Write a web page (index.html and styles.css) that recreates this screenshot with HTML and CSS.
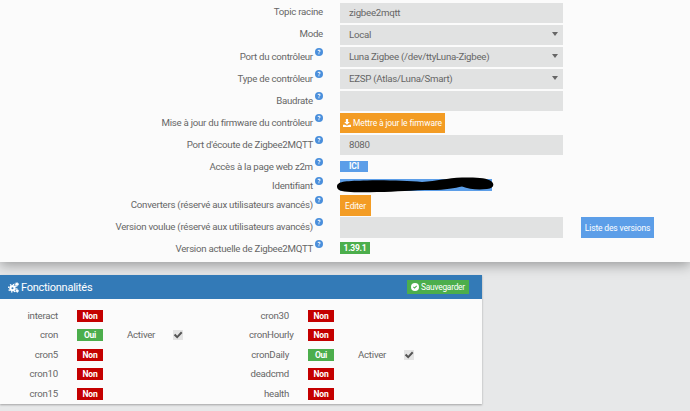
FILE: index.html
```html
<!DOCTYPE html>
<html lang="fr">
<head>
<meta charset="utf-8">
<title>Zigbee2MQTT</title>
<link rel="stylesheet" href="styles.css">
</head>
<body>
<svg class="sprites" width="0" height="0" aria-hidden="true">
  <symbol id="help" viewBox="0 0 16 16"><circle cx="8" cy="8" r="8" fill="#4a8fdc"/><path d="M5.200 6.200C5.300 4.500 6.500 3.600 8.100 3.600c1.700 0 2.900 1 2.900 2.400 0 1.100-.6 1.700-1.400 2.200-.7.500-.9.700-.9 1.500H7c0-1.300.4-1.900 1.200-2.400.7-.5 1-.8 1-1.300 0-.6-.5-1-1.100-1-.7 0-1.100.4-1.200 1.200zM6.900 10.600h1.900v1.900H6.900z" fill="#fff"/></symbol>
  <symbol id="ok" viewBox="0 0 16 16"><circle cx="8" cy="8" r="8" fill="#fff"/><path d="M4 8.300l1.500-1.500 1.700 1.700 3.400-3.500 1.500 1.500-4.900 5z" fill="#4cae4c"/></symbol>
</svg>

<section class="config">
  <div class="row"><span class="label">Topic racine</span><div class="field">zigbee2mqtt</div></div>
  <div class="row"><span class="label">Mode</span><div class="field select">Local</div></div>
  <div class="row"><span class="label">Port du contrôleur <svg class="help"><use href="#help"/></svg></span><div class="field select">Luna Zigbee (/dev/ttyLuna-Zigbee)</div></div>
  <div class="row"><span class="label">Type de contrôleur <svg class="help"><use href="#help"/></svg></span><div class="field select">EZSP (Atlas/Luna/Smart)</div></div>
  <div class="row"><span class="label">Baudrate <svg class="help"><use href="#help"/></svg></span><div class="field"></div></div>
  <div class="row"><span class="label">Mise à jour du firmware du contrôleur <svg class="help"><use href="#help"/></svg></span>
    <div class="btn orange upd"><svg class="dl" viewBox="0 0 12 12"><path d="M4.300 0h3.400v4.500h2.500L6 8.600 1.800 4.500h2.500zM0 8.500h2.800L6 10l3.200-1.500H12V12H0z" fill="#fff"/></svg>Mettre à jour le firmware</div></div>
  <div class="row"><span class="label">Port d'écoute de Zigbee2MQTT <svg class="help"><use href="#help"/></svg></span><div class="field">8080</div></div>
  <div class="row short"><span class="label">Accès à la page web z2m <svg class="help"><use href="#help"/></svg></span><span class="tag blue ici">ICI</span></div>
  <div class="row id-row"><span class="label">Identifiant <svg class="help"><use href="#help"/></svg></span>
    <div class="id-wrap"><div class="id-bar"></div>
      <svg class="scribble" viewBox="0 0 157 16"><path d="M0 9C1 4 10 4 30 3.500C50 3 70 4 85 5C100 4 110 1 125 .5C140 0 150 1 154 4C158 7 157 11 150 12C140 13 132 12 125 9.500C118 11 108 13 95 13C75 13 60 15 40 15C25 15.500 5 15.500 2 13C0 12 0 10 0 9Z" fill="#000"/></svg>
    </div></div>
  <div class="row tall"><span class="label">Converters (réservé aux utilisateurs avancés) <svg class="help"><use href="#help"/></svg></span><div class="btn orange edit">Editer</div></div>
  <div class="row tall"><span class="label">Version voulue (réservé aux utilisateurs avancés) <svg class="help"><use href="#help"/></svg></span><div class="field"></div><div class="btn blue list">Liste des versions</div></div>
  <div class="row short last"><span class="label">Version actuelle de Zigbee2MQTT <svg class="help"><use href="#help"/></svg></span><span class="tag green version">1.39.1</span></div>
</section>

<section class="panel">
  <header class="panel-head">
    <h3 class="panel-title"><svg class="cogs" viewBox="0 0 16 16"><circle cx="6.500" cy="9" r="4.500" fill="#fff"/><circle cx="6.500" cy="9" r="5.500" fill="none" stroke="#fff" stroke-width="2" stroke-dasharray="2 2.300"/><circle cx="6.500" cy="9" r="1.500" fill="#337ab7"/><circle cx="12.800" cy="3.200" r="2.200" fill="#fff"/><circle cx="12.800" cy="3.200" r="2.800" fill="none" stroke="#fff" stroke-width="1.200" stroke-dasharray="1.400 1.500"/><circle cx="13.300" cy="12.800" r="2" fill="#fff"/><circle cx="13.300" cy="12.800" r="2.600" fill="none" stroke="#fff" stroke-width="1.200" stroke-dasharray="1.300 1.400"/></svg>Fonctionnalités</h3>
    <div class="save"><svg class="ok"><use href="#ok"/></svg>Sauvegarder</div>
  </header>
  <div class="grid">
    <div class="item"><span class="name">interact</span><span class="tag red state">Non</span></div>
    <div class="item"><span class="name">cron30</span><span class="tag red state">Non</span></div>
    <div class="item"><span class="name">cron</span><span class="tag green state">Oui</span><span class="act">Activer</span><span class="check"><svg viewBox="0 0 10 10"><path d="M.8 5.300l1.500-1.500 1.900 1.900L8 1.500 9.400 3 4.200 8.500z" fill="#555"/></svg></span></div>
    <div class="item"><span class="name">cronHourly</span><span class="tag red state">Non</span></div>
    <div class="item"><span class="name">cron5</span><span class="tag red state">Non</span></div>
    <div class="item"><span class="name">cronDaily</span><span class="tag green state">Oui</span><span class="act">Activer</span><span class="check"><svg viewBox="0 0 10 10"><path d="M.8 5.300l1.500-1.500 1.900 1.900L8 1.500 9.400 3 4.200 8.500z" fill="#555"/></svg></span></div>
    <div class="item"><span class="name">cron10</span><span class="tag red state">Non</span></div>
    <div class="item"><span class="name">deadcmd</span><span class="tag red state">Non</span></div>
    <div class="item"><span class="name">cron15</span><span class="tag red state">Non</span></div>
    <div class="item"><span class="name">health</span><span class="tag red state">Non</span></div>
  </div>
</section>
</body>
</html>
```

FILE: styles.css
```css
* { box-sizing: border-box; }
html, body { height: 100%; }
body {
  margin: 0;
  overflow: hidden;
  background: #e7e8e9;
  color: #666;
  font: 9.700px/12px Roboto, "Liberation Sans", sans-serif;
  letter-spacing: -.26px;
}
.sprites { position: absolute; }
.config {
  height: 262px;
  padding-top: 3px;
  background: #fbfbfb;
  box-shadow: 0 3px 12px rgba(0, 0, 0, .35);
}
.row {
  display: flex;
  align-items: center;
  height: 20px;
  margin-bottom: 2px;
}
.row.short { height: 18px; }
.row.id-row { height: 16px; }
.row.tall { height: 21px; margin-bottom: 1px; }
.row.last { margin-top: 1px; }
.label {
  flex: none;
  width: 325px;
  margin-right: 15px;
  padding: 0 2px 3px 0;
  text-align: right;
  white-space: nowrap;
}
.tall .label { padding-bottom: 4px; }
.short .label, .id-row .label { padding-bottom: 1px; }
.help {
  width: 8px;
  height: 8px;
  vertical-align: 4px;
}
.field {
  position: relative;
  flex: none;
  width: 223px;
  height: 100%;
  padding: 0 9px;
  background: #e1e2e2;
  line-height: 20px;
}
.tall .field { line-height: 21px; }
.select::after {
  content: "";
  position: absolute;
  right: 5px;
  top: 7px;
  border: 4px solid transparent;
  border-top-color: #666;
  border-bottom: 0;
  border-left-width: 3px;
  border-right-width: 3px;
}
.btn {
  display: flex;
  align-items: center;
  justify-content: center;
  height: 100%;
  color: #fff;
  font-size: 8.500px;
  letter-spacing: -.15px;
}
.orange { background: #f39c24; }
.blue { background: #5c9ee8; color: #fff; }
.upd { width: 105px; }
.dl { width: 8px; height: 8px; margin-right: 2px; }
.edit { width: 31px; }
.list { width: 73px; margin-left: 18px; }
.tag {
  display: block;
  height: 12px;
  color: #fff;
  font-size: 8.500px;
  font-weight: 700;
  line-height: 12px;
  text-align: center;
}
.ici { width: 28px; height: 11px; line-height: 11px; }
.green { background: #4cae4c; }
.red { background: #c40000; }
.version { width: 30px; }
.id-wrap { position: relative; width: 152px; height: 12px; }
.id-bar { height: 12px; background: #5c9ee8; }
.scribble {
  position: absolute;
  left: -3px;
  top: -2px;
  width: 157px;
  height: 16px;
}
.panel {
  width: 482px;
  height: 129px;
  margin-top: 13px;
  background: #fbfbfb;
  box-shadow: 0 1px 2px rgba(0, 0, 0, .3);
}
.panel-head {
  display: flex;
  align-items: center;
  justify-content: space-between;
  height: 24px;
  padding: 0 13px 0 8px;
  background: #337ab7;
  color: #fff;
}
.panel-title {
  display: flex;
  align-items: center;
  margin: 1px 0 0;
  font-size: 11px;
  font-weight: 400;
}
.cogs { width: 11px; height: 11px; margin-right: 2px; }
.save {
  display: flex;
  align-items: center;
  justify-content: center;
  width: 62px;
  height: 14px;
  background: #4cae4c;
  font-size: 8.400px;
}
.ok { width: 8px; height: 8px; margin-right: 2px; }
.grid {
  display: grid;
  grid-template-columns: 231px 231px;
  grid-auto-rows: 19.500px;
  padding: 7px 0 0 18px;
}
.item { display: flex; align-items: center; }
.name { flex: none; width: 40px; text-align: right; white-space: nowrap; }
.state { flex: none; width: 26px; margin-left: 19px; }
.act { margin-left: 24px; width: 46px; }
.check {
  display: flex;
  align-items: center;
  justify-content: center;
  width: 10px;
  height: 10px;
  background: #e4e4e4;
}
.check svg { width: 10px; height: 10px; }
```
